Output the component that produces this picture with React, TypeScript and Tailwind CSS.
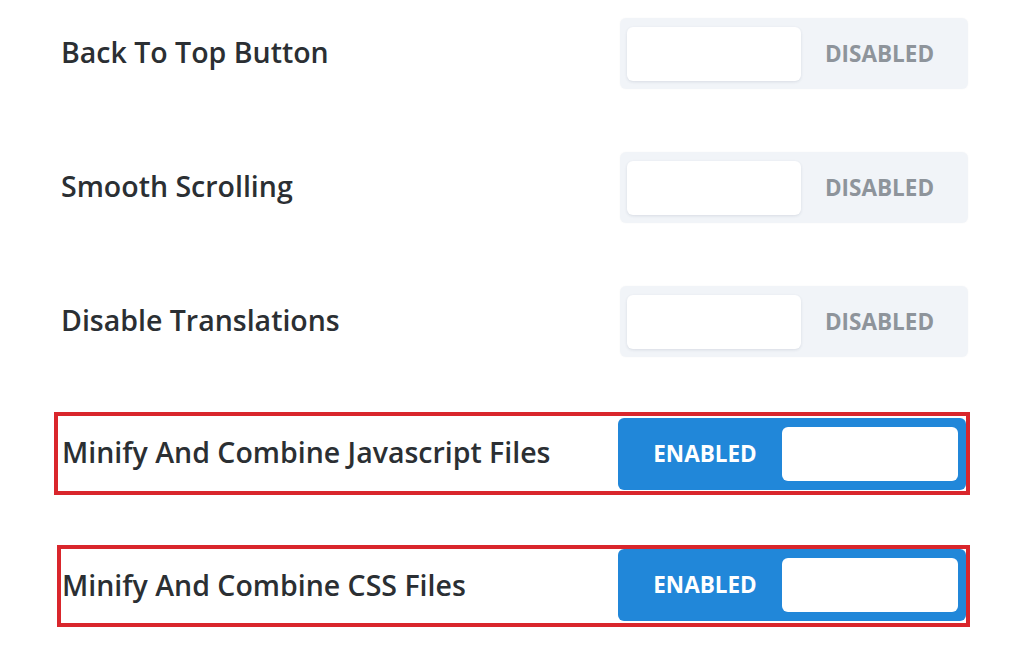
import React from "react";

const font = { fontFamily: '"Open Sans", "Noto Sans", sans-serif' };

function Disabled() {
  return (
    <div className="flex h-[71px] w-[348px] shrink-0 items-center rounded-[6px] bg-[#f1f4f8] pl-[7px] pr-[10px] shadow-[0_0_2px_rgba(0,0,0,0.04)]">
      <div className="h-[54px] w-[174px] rounded-[6px] bg-white shadow-[0_1px_3px_rgba(40,60,90,0.12)]" />
      <div className="flex-1 text-center text-[22.5px] font-bold text-[#8e949b]">DISABLED</div>
    </div>
  );
}

function Enabled() {
  return (
    <div className="flex h-[72px] w-[348px] shrink-0 items-center rounded-[6px] bg-[#2187d9] pr-[8px]">
      <div className="flex-1 pl-[10px] text-center text-[22.5px] font-bold text-white">ENABLED</div>
      <div className="h-[54px] w-[176px] rounded-[6px] bg-white" />
    </div>
  );
}

function Label({ children, lift = true }: { children: React.ReactNode; lift?: boolean }) {
  return (
    <div className={lift ? "-mt-[3px] text-[28.5px] font-semibold text-[#2b2f33]" : "mt-[1px] text-[28.5px] font-semibold text-[#2b2f33]"}>
      {children}
    </div>
  );
}

export default function App() {
  return (
    <div className="h-[658px] w-[1024px] overflow-hidden bg-white" style={font}>
      <div className="flex flex-col pt-[18px]">
        <div className="flex items-center justify-between pl-[61px] pr-[56px]">
          <Label>Back To Top Button</Label>
          <Disabled />
        </div>
        <div className="mt-[63px] flex items-center justify-between pl-[61px] pr-[56px]">
          <Label>Smooth Scrolling</Label>
          <Disabled />
        </div>
        <div className="mt-[63px] flex items-center justify-between pl-[61px] pr-[56px]">
          <Label>Disable Translations</Label>
          <Disabled />
        </div>
        <div className="ml-[54px] mt-[55px] flex w-[916px] items-center justify-between border-[4px] border-[#d9262c] pb-[1px] pl-[4px] pt-[2px]">
          <Label>Minify And Combine Javascript Files</Label>
          <Enabled />
        </div>
        <div className="ml-[57px] mt-[50px] flex w-[913px] items-center justify-between border-[4px] border-[#d9262c] pb-[2px] pl-[1px] pt-0">
          <Label lift={false}>Minify And Combine CSS Files</Label>
          <Enabled />
        </div>
      </div>
    </div>
  );
}
